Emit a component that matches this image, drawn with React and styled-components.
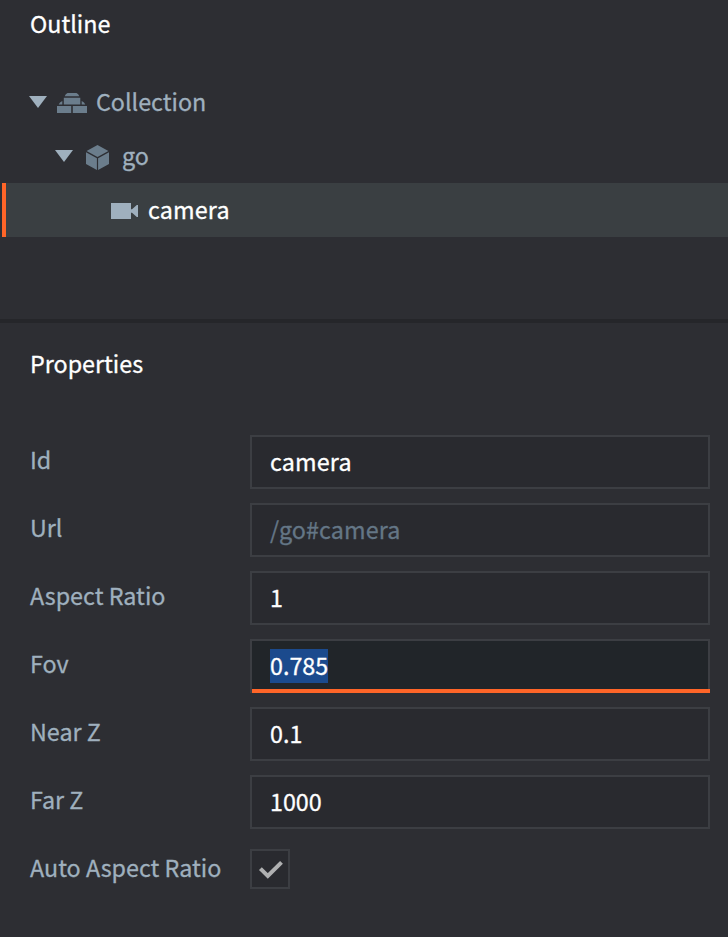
import React from "react";
import styled, { createGlobalStyle } from "styled-components";

const GlobalStyle = createGlobalStyle`
  * { box-sizing: border-box; }
  body {
    margin: 0;
    background: #2d2e33;
    font-family: "Source Sans Pro", "Noto Sans CJK SC", sans-serif;
    font-size: 23.3px;
    line-height: 34px;
    -webkit-text-stroke: 0.3px currentColor;
    overflow: hidden;
  }
`;

const Editor = styled.main`
  display: flex;
  flex-direction: column;
  height: 937px;
  background: #2d2e33;
  color: #fff;
`;

const OutlinePanel = styled.section`
  height: 323px;
  border-bottom: 4px solid #25262a;
`;

const PropertiesPanel = styled.section`
  flex: 1;
`;

const PanelTitle = styled.h2`
  margin: 0;
  padding: ${(p) => p.$top}px 0 0 30px;
  height: ${(p) => p.$height}px;
  font-size: inherit;
  font-weight: 400;
`;

const TreeRow = styled.div`
  display: flex;
  align-items: center;
  height: 54px;
  margin-left: 2px;
  padding-left: ${(p) => p.$indent}px;
  border-left: 4px solid ${(p) => (p.$selected ? "#ff6528" : "transparent")};
  background: ${(p) => (p.$selected ? "#3a3f42" : "transparent")};
  color: ${(p) => (p.$selected ? "#fff" : "#9fb0be")};
`;

const Arrow = styled.svg`
  width: 18px;
  height: 12px;
  flex: none;
  fill: #9fb0be;
`;

const NodeIcon = styled.svg`
  flex: none;
  margin: ${(p) => p.$top || 0}px ${(p) => p.$right}px 0 ${(p) => p.$left}px;
  fill: ${(p) => (p.$bright ? "#9fb0be" : "#6b7d8c")};
`;

const NodeName = styled.span`
  padding-bottom: 2px;
  letter-spacing: ${(p) => p.$tracking || 0}px;
`;

const Form = styled.div`
  display: flex;
  flex-direction: column;
  gap: 14px;
`;

const FormRow = styled.div`
  display: grid;
  grid-template-columns: 220px 460px;
  height: 54px;
  padding-left: 30px;
`;

const Label = styled.label`
  padding-top: 7px;
  color: #9fb0be;
  white-space: nowrap;
`;

const Field = styled.div`
  display: flex;
  align-items: flex-start;
  height: 54px;
  padding: 8px 0 0 18px;
  border: 2px solid #3c3e43;
  background: ${(p) => (p.$focused ? "#212529" : "#292a2f")};
  color: ${(p) => (p.$muted ? "#647686" : "#fff")};
  ${(p) => p.$focused && "border-bottom: 0;"}
  position: relative;

  &::after {
    content: "";
    display: ${(p) => (p.$focused ? "block" : "none")};
    position: absolute;
    left: 0;
    right: -2px;
    bottom: 0;
    height: 4px;
    background: #ff6528;
  }
`;

const Value = styled.span`
  height: 34px;
  line-height: 32px;
  letter-spacing: ${(p) => p.$tracking || 0}px;
  background: ${(p) => (p.$highlighted ? "#1b4a8d" : "transparent")};
`;

const Checkbox = styled.div`
  width: 40px;
  height: 40px;
  margin-top: 6px;
  border: 2px solid #3c3e43;
  background: #292a2f;
`;

const Check = styled.svg`
  display: block;
  width: 36px;
  height: 36px;
  fill: none;
  stroke: #afb0b1;
  stroke-width: 4;
`;

const fields = [
  { label: "Id", value: "camera", tracking: 0.15 },
  { label: "Url", value: "/go#camera", muted: true, tracking: 0.1 },
  { label: "Aspect Ratio", value: "1" },
  { label: "Fov", value: "0.785", focused: true },
  { label: "Near Z", value: "0.1" },
  { label: "Far Z", value: "1000" },
];

const ExpandArrow = () => (
  <Arrow viewBox="0 0 18 12">
    <path d="M0 0H18L9 12Z" />
  </Arrow>
);

export default function App() {
  return (
    <>
      <GlobalStyle />
      <Editor>
        <OutlinePanel>
          <PanelTitle $top={6} $height={75}>Outline</PanelTitle>
          <TreeRow $indent={23}>
            <ExpandArrow />
            <NodeIcon $left={10} $right={9} $top={2} width="30" height="20" viewBox="0 0 30 20">
              <path d="M10.5 0H19.5Q21.5 1 22.3 3.2H7.7Q8.5 1 10.5 0ZM6.8 4.7H23.3V11.6H6.8ZM5.3 8V11.6H1.7Q2.5 9 5.3 8ZM24.7 8Q27.5 9 28.3 11.6H24.7ZM0 13H14.2V20H0ZM15.8 13H30V20H15.8Z" />
            </NodeIcon>
            <NodeName>Collection</NodeName>
          </TreeRow>
          <TreeRow $indent={49}>
            <ExpandArrow />
            <NodeIcon $left={13} $right={13} $top={2} width="23" height="25" viewBox="0 0 23 25">
              <path d="M11.5 0L22.4 6L11.5 12L.6 6ZM0 7.3L10.9 13.3V25L0 19ZM23 7.3L12.1 13.3V25L23 19Z" />
            </NodeIcon>
            <NodeName>go</NodeName>
          </TreeRow>
          <TreeRow $indent={105} $selected>
            <NodeIcon $left={0} $right={10} $top={2} $bright width="27" height="16" viewBox="0 0 27 16">
              <path d="M0 0H20V6.3L21 6.3L25.8 2H27V14H25.8L21 9.7H20V16H0Z" />
            </NodeIcon>
            <NodeName $tracking={0.15}>camera</NodeName>
          </TreeRow>
        </OutlinePanel>
        <PropertiesPanel>
          <PanelTitle $top={23} $height={112}>Properties</PanelTitle>
          <Form>
            {fields.map((f) => (
              <FormRow key={f.label}>
                <Label>{f.label}</Label>
                <Field $focused={f.focused} $muted={f.muted}>
                  <Value $highlighted={f.focused} $tracking={f.tracking}>{f.value}</Value>
                </Field>
              </FormRow>
            ))}
            <FormRow>
              <Label>Auto Aspect Ratio</Label>
              <Checkbox>
                <Check viewBox="0 0 36 36">
                  <path d="M8.4 17.6L15.8 24.9L29.5 11.3" />
                </Check>
              </Checkbox>
            </FormRow>
          </Form>
        </PropertiesPanel>
      </Editor>
    </>
  );
}
